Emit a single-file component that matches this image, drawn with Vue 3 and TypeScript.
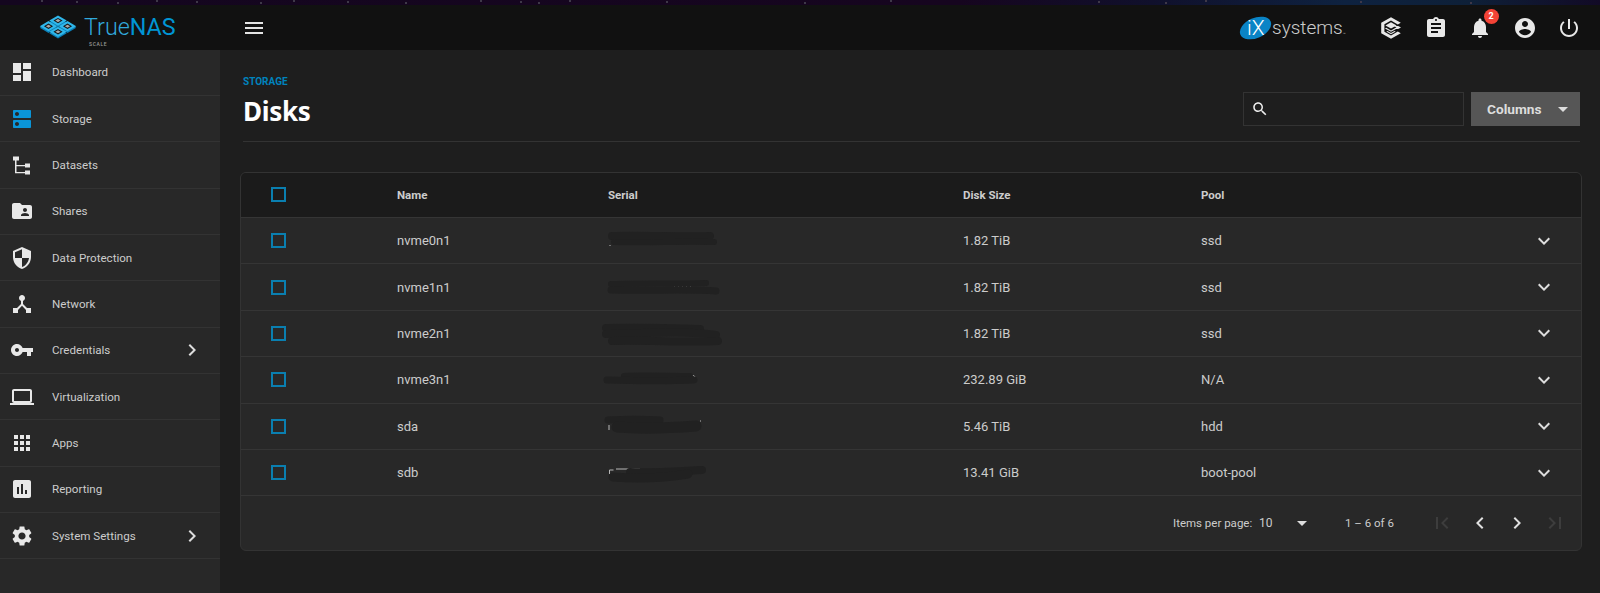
<script setup lang="ts">
interface NavItem { label: string; d: string; arrow?: boolean; active?: boolean }
const nav: NavItem[] = [
  { label: 'Dashboard', d: 'M3 13h8V3H3v10zm0 8h8v-6H3v6zm10 0h8V11h-8v10zm0-18v6h8V3h-8z' },
  { label: 'Storage', active: true, d: 'M20 13H4c-.55 0-1 .45-1 1v6c0 .55.45 1 1 1h16c.55 0 1-.45 1-1v-6c0-.55-.45-1-1-1zM7 19c-1.1 0-2-.9-2-2s.9-2 2-2 2 .9 2 2-.9 2-2 2zM20 3H4c-.55 0-1 .45-1 1v6c0 .55.45 1 1 1h16c.55 0 1-.45 1-1V4c0-.55-.45-1-1-1zM7 9c-1.1 0-2-.9-2-2s.9-2 2-2 2 .9 2 2-.9 2-2 2z' },
  { label: 'Datasets', d: 'M3 3.500h6v4H6.500V12H15v-1.500h5v4h-5V13.300H6.500V19H15v-1.500h5v4h-5v-1.200H5V7.500H3z' },
  { label: 'Shares', d: 'M20 6h-8l-2-2H4c-1.1 0-1.99.9-1.99 2L2 18c0 1.1.9 2 2 2h16c1.1 0 2-.9 2-2V8c0-1.1-.9-2-2-2zm-5 3c1.1 0 2 .9 2 2s-.9 2-2 2-2-.9-2-2 .9-2 2-2zm4 8h-8v-1c0-1.33 2.67-2 4-2s4 .67 4 2v1z' },
  { label: 'Data Protection', d: 'M12 1L3 5v6c0 5.55 3.84 10.74 9 12 5.16-1.26 9-6.45 9-12V5l-9-4zm0 10.99h7c-.53 4.12-3.28 7.79-7 8.94V12H5V6.3l7-3.11v8.8z' },
  { label: 'Network', d: 'M17 16l-4-4V8.82C14.16 8.4 15 7.3 15 6c0-1.66-1.34-3-3-3S9 4.34 9 6c0 1.3.84 2.4 2 2.82V12l-4 4H3v5h5v-3.05l4-4.2 4 4.2V21h5v-5h-4z' },
  { label: 'Credentials', arrow: true, d: 'M12.65 10C11.83 7.67 9.61 6 7 6c-3.31 0-6 2.69-6 6s2.69 6 6 6c2.61 0 4.83-1.67 5.65-4H17v4h4v-4h2v-4H12.65zM7 14c-1.1 0-2-.9-2-2s.9-2 2-2 2 .9 2 2-.9 2-2 2z' },
  { label: 'Virtualization', d: 'M20 18c1.1 0 1.99-.9 1.99-2L22 6c0-1.1-.9-2-2-2H4c-1.1 0-2 .9-2 2v10c0 1.1.9 2 2 2H0v2h24v-2h-4zM4 6h16v10H4V6z' },
  { label: 'Apps', d: 'M4 8h4V4H4v4zm6 12h4v-4h-4v4zm-6 0h4v-4H4v4zm0-6h4v-4H4v4zm6 0h4v-4h-4v4zm6-10v4h4V4h-4zm-6 4h4V4h-4v4zm6 6h4v-4h-4v4zm0 6h4v-4h-4v4z' },
  { label: 'Reporting', d: 'M19 3H5c-1.100 0-2 .9-2 2v14c0 1.100.9 2 2 2h14c1.100 0 2-.9 2-2V5c0-1.100-.9-2-2-2zM9 17H7v-7h2v7zm4 0h-2V7h2v10zm4 0h-2v-4h2v4z' },
  { label: 'System Settings', arrow: true, d: 'M19.14 12.94c.04-.3.06-.61.06-.94 0-.32-.02-.64-.07-.94l2.03-1.58c.18-.14.23-.41.12-.61l-1.92-3.32c-.12-.22-.37-.29-.59-.22l-2.39.96c-.5-.38-1.03-.7-1.62-.94l-.36-2.54c-.04-.24-.24-.41-.48-.41h-3.84c-.24 0-.43.17-.47.41l-.36 2.54c-.59.24-1.13.57-1.62.94l-2.39-.96c-.22-.08-.47 0-.59.22L2.74 8.87c-.12.21-.08.47.12.61l2.03 1.58c-.05.3-.09.63-.09.94s.02.64.07.94l-2.03 1.58c-.18.14-.23.41-.12.61l1.92 3.32c.12.22.37.29.59.22l2.39-.96c.5.38 1.03.7 1.62.94l.36 2.54c.05.24.24.41.48.41h3.84c.24 0 .44-.17.47-.41l.36-2.54c.59-.24 1.13-.56 1.62-.94l2.39.96c.22.08.47 0 .59-.22l1.92-3.32c.12-.22.07-.47-.12-.61l-2.01-1.58zM12 15.6c-1.98 0-3.6-1.62-3.6-3.6s1.62-3.6 3.6-3.6 3.6 1.62 3.6 3.6-1.62 3.6-3.6 3.6z' },
]
interface Stroke { d: string; w: number }
interface Disk { name: string; size: string; pool: string; ink: Stroke[]; speck: string }
const disks: Disk[] = [
  { name: 'nvme0n1', size: '1.82 TiB', pool: 'ssd', ink: [{ d: 'M12 9C40 8 80 10 110 9', w: 8 }, { d: 'M14 15C50 16 80 14 114 15', w: 6 }], speck: 'M10 18v1' },
  { name: 'nvme1n1', size: '1.82 TiB', pool: 'ssd', ink: [{ d: 'M11 11C40 10 80 11 106 10', w: 6 }, { d: 'M11 17C50 18 90 16 116 18', w: 7 }], speck: 'M74 13h1M78 13h1M82 13h1M86 13h1M90 13h1' },
  { name: 'nvme2n1', size: '1.82 TiB', pool: 'ssd', ink: [{ d: 'M6 9C40 8 70 9 100 10', w: 8 }, { d: 'M6 15C50 14 90 12 116 16', w: 8 }, { d: 'M12 22C50 21 90 24 118 22', w: 8 }], speck: 'M110 19h3' },
  { name: 'nvme3n1', size: '232.89 GiB', pool: 'N/A', ink: [{ d: 'M24 10C40 9 70 10 90 10', w: 6 }, { d: 'M7 14C40 15 70 15 94 14', w: 7 }], speck: 'M91 11c1-2 3-2 4 0' },
  { name: 'sda', size: '5.46 TiB', pool: 'hdd', ink: [{ d: 'M8 8C25 7 45 7 60 8', w: 7 }, { d: 'M17 15C40 17 70 16 96 14', w: 11 }], speck: 'M9 13v5M21 15h2M100 9h1' },
  { name: 'sdb', size: '13.41 GiB', pool: 'boot-pool', ink: [{ d: 'M30 13C50 14 80 12 102 11', w: 8 }, { d: 'M13 18C40 20 70 18 88 15', w: 9 }], speck: 'M9.500 15v-4h4M16 10h24' },
]
const starXs = [41, 76, 117, 156, 196, 260, 293, 347, 405, 480, 520, 538, 569, 666, 804, 890, 1098, 1165, 1205, 1360, 1470]
const stars = starXs.map((x, i) => ({ gap: i === 0 ? x : x - starXs[i - 1] - 2, top: i % 3 }))
const cells: [number, number][] = [[0, 0], [1, 0], [0, 1], [1, 1]]
</script>

<template>
  <div class="page">
    <div class="strip"><i v-for="(s, i) in stars" :key="i" class="star" :style="{ marginLeft: s.gap + 'px', marginTop: s.top + 'px' }"></i></div>
    <header class="topbar">
      <div class="brand">
        <svg class="brand-mark" viewBox="0 0 38 26">
          <g v-for="c in cells" :key="c.join()">
            <g transform="translate(19 1) matrix(9.500 5.600 -9.500 5.600 0 0)">
              <rect :x="c[0] + 0.04" :y="c[1] + 0.04" width=".92" height=".92" fill="#0a7fb8" transform="translate(.14 .14)" />
              <rect :x="c[0] + 0.04" :y="c[1] + 0.04" width=".92" height=".92" fill="#2fb6ea" />
              <rect :x="c[0] + 0.26" :y="c[1] + 0.26" width=".48" height=".48" fill="#161616" />
              <rect :x="c[0] + 0.36" :y="c[1] + 0.36" width=".28" height=".28" fill="#a8a8a8" />
            </g>
          </g>
        </svg>
        <div class="brand-text">
          <div class="brand-name"><span class="true">True</span><span class="nas">NAS</span></div>
          <div class="brand-sub">SCALE</div>
        </div>
      </div>
      <svg class="ic24 menu" viewBox="0 0 24 24"><path d="M3 18h18v-2H3v2zm0-5h18v-2H3v2zm0-7v2h18V6H3z" /></svg>
      <div class="grow"></div>
      <div class="ix">
        <div class="ix-logo">
          <span class="ix-oval"></span>
          <span class="ix-text">iX</span>
        </div>
        <span class="ix-word">systems</span><span class="tm">™</span>
      </div>
      <svg class="ic24 tb stack" viewBox="0 0 24 24">
        <path d="M12 1.200l9.800 5.500-3 1.700L12 4.600 5.400 8.200v7.600L12 19.400l6.800-3.800 3 1.700L12 22.800l-9.800-5.500V6.700z" />
        <path d="M12 6.300l5.600 3.100L12 12.500 6.400 9.400zM7.200 11.800l4.800 2.600 4.800-2.600 1.200.7-6 3.300-6-3.300zM8.500 14.900l3.500 2 3.500-2 1.200.7L12 18.300l-4.700-2.700z" />
        <path d="M15 9.900h4.200L22 11.400l-2.800 1.500h-3.600l1.800-1.500z" />
      </svg>
      <svg class="ic24 tb clip" viewBox="0 0 24 24"><path d="M19 3h-4.180C14.400 1.840 13.300 1 12 1c-1.300 0-2.400.84-2.820 2H5c-1.100 0-2 .9-2 2v14c0 1.100.9 2 2 2h14c1.100 0 2-.9 2-2V5c0-1.100-.9-2-2-2zm-7 0c.55 0 1 .45 1 1s-.45 1-1 1-1-.45-1-1 .45-1 1-1zm2 14H7v-2h7v2zm3-4H7v-2h10v2zm0-4H7V7h10v2z" /></svg>
      <div class="bell">
        <svg class="ic24" viewBox="0 0 24 24"><path d="M12 22c1.100 0 2-.9 2-2h-4c0 1.100.89 2 2 2zm6-6v-5c0-3.070-1.640-5.640-4.500-6.320V4c0-.83-.67-1.500-1.500-1.500s-1.500.67-1.500 1.500v.68C7.630 5.360 6 7.920 6 11v5l-2 2v1h16v-1l-2-2z" /></svg>
        <span class="badge">2</span>
      </div>
      <svg class="ic24 tb acct" viewBox="0 0 24 24"><path d="M12 2C6.480 2 2 6.480 2 12s4.480 10 10 10 10-4.480 10-10S17.520 2 12 2zm0 3c1.660 0 3 1.340 3 3s-1.340 3-3 3-3-1.340-3-3 1.340-3 3-3zm0 14.200c-2.500 0-4.710-1.280-6-3.220.03-1.990 4-3.080 6-3.080 1.990 0 5.970 1.090 6 3.080-1.290 1.940-3.500 3.220-6 3.220z" /></svg>
      <svg class="ic24 tb power" viewBox="0 0 24 24"><path d="M13 3h-2v10h2V3zm4.830 2.170l-1.420 1.420C17.990 7.860 19 9.810 19 12c0 3.870-3.130 7-7 7s-7-3.130-7-7c0-2.190 1.010-4.140 2.580-5.420L6.170 5.170C4.230 6.820 3 9.260 3 12c0 4.970 4.030 9 9 9s9-4.030 9-9c0-2.740-1.230-5.180-3.170-6.830z" /></svg>
    </header>
    <div class="body">
      <aside class="side">
        <nav class="nav">
          <div v-for="n in nav" :key="n.label" class="nav-row">
            <svg class="ic24 nav-ic" :class="{ active: n.active }" viewBox="0 0 24 24"><path :d="n.d" /></svg>
            <span class="nav-label">{{ n.label }}</span>
            <svg v-if="n.arrow" class="ic24 nav-arrow" viewBox="0 0 24 24"><path d="M10 6L8.590 7.410 13.170 12l-4.580 4.590L10 18l6-6z" /></svg>
          </div>
        </nav>
      </aside>
      <main class="main">
        <div class="head">
          <div class="titles">
            <div class="crumb">STORAGE</div>
            <h1 class="title">Disks</h1>
          </div>
          <div class="search">
            <svg class="search-ic" viewBox="0 0 24 24"><path d="M15.500 14h-.79l-.28-.27C15.410 12.590 16 11.110 16 9.500 16 5.910 13.090 3 9.500 3S3 5.910 3 9.500 5.910 16 9.500 16c1.610 0 3.090-.59 4.230-1.570l.27.28v.79l5 4.990L20.490 19l-4.990-5zm-6 0C7.010 14 5 11.990 5 9.500S7.010 5 9.500 5 14 7.010 14 9.500 11.990 14 9.500 14z" /></svg>
          </div>
          <button class="columns" type="button">Columns<span class="caret"></span></button>
        </div>
        <section class="card">
          <div class="row hrow">
            <span class="check"></span><span>Name</span><span>Serial</span><span>Disk Size</span><span>Pool</span><span></span>
          </div>
          <div v-for="d in disks" :key="d.name" class="row drow">
            <span class="check"></span>
            <span>{{ d.name }}</span>
            <span class="serial">
              <svg width="126" height="28" viewBox="0 0 126 28">
                <path :d="d.speck" fill="none" stroke="#b8b8b8" stroke-width="1" />
                <path v-for="(s, i) in d.ink" :key="i" :d="s.d" fill="none" stroke="#212121" :stroke-width="s.w" stroke-linecap="round" />
              </svg>
            </span>
            <span>{{ d.size }}</span>
            <span>{{ d.pool }}</span>
            <svg class="ic24 more" viewBox="0 0 24 24"><path d="M16.590 8.590L12 13.170 7.410 8.590 6 10l6 6 6-6z" /></svg>
          </div>
          <div class="pager">
            <span class="ppl">Items per page:</span>
            <span class="pps">10</span>
            <span class="pcaret"></span>
            <span class="range">1 – 6 of 6</span>
            <svg class="ic24 pg off" viewBox="0 0 24 24"><path d="M18.410 16.590L13.820 12l4.590-4.590L17 6l-6 6 6 6zM6 6h2v12H6z" /></svg>
            <svg class="ic24 pg" viewBox="0 0 24 24"><path d="M15.410 7.410L14 6l-6 6 6 6 1.410-1.410L10.830 12z" /></svg>
            <svg class="ic24 pg" viewBox="0 0 24 24"><path d="M10 6L8.590 7.410 13.170 12l-4.580 4.590L10 18l6-6z" /></svg>
            <svg class="ic24 pg off" viewBox="0 0 24 24"><path d="M5.590 7.410L10.180 12l-4.590 4.590L7 18l6-6-6-6zM16 6h2v12h-2z" /></svg>
          </div>
        </section>
      </main>
    </div>
  </div>
</template>

<style>
html, body { margin: 0; background: #1e1e1e; }
</style>

<style scoped>
.page { width: 1600px; height: 593px; overflow: hidden; display: flex; flex-direction: column; font-family: Roboto, "Liberation Sans", sans-serif; color: #ccc; background: #1e1e1e; }
.strip { height: 4.500px; flex: none; display: flex; overflow: hidden; background: linear-gradient(90deg, #14061f 0%, #16051f 60%, #10102c 72%, #0e2240 84%, #0e2038 92%, #120a26 100%); }
.star { display: block; width: 2px; height: 2px; flex: none; background: #3e3848; }
.topbar { height: 45px; flex: none; display: flex; align-items: center; padding-top: 1px; box-sizing: border-box; background: #111; }
.ic24 { width: 24px; height: 24px; flex: none; fill: currentColor; display: block; }
.brand { width: 242px; flex: none; display: flex; align-items: flex-start; padding-left: 39px; box-sizing: border-box; }
.brand-mark { width: 38px; height: 26px; flex: none; margin-top: 2px; }
.brand-text { margin-left: 7px; height: 32px; }
.brand-name { font-size: 23.300px; line-height: 30px; font-weight: 300; white-space: nowrap; }
.true { color: #31a9dc; }
.nas { color: #0095d5; font-weight: 400; }
.brand-sub { font-size: 5px; line-height: 6px; letter-spacing: .6px; color: #999; margin-left: 5px; margin-top: -1px; font-weight: 500; }
.menu { color: #e4e4e4; }
.grow { flex: 1; }
.ix { display: flex; align-items: center; width: 121px; flex: none; margin-right: 19px; }
.ix-logo { position: relative; width: 33px; height: 24px; flex: none; }
.ix-oval { position: absolute; left: 0; top: 2px; width: 33px; height: 20px; border-radius: 50%; background: #0a84c6; transform: rotate(-24deg); }
.ix-text { position: absolute; left: 8px; top: 0; color: #fff; font-size: 21px; line-height: 24px; font-weight: 300; }
.ix-word { font-size: 19px; font-weight: 300; color: #ccc; margin-left: 0; }
.tm { font-size: 5px; color: #aaa; align-self: flex-start; margin-top: 15px; }
.tb { color: #e8e8e8; }
.stack { margin-right: 21px; }
.clip { margin-right: 20px; }
.bell { position: relative; width: 24px; height: 24px; flex: none; margin-right: 21px; color: #e8e8e8; }
.badge { position: absolute; left: 15.500px; top: -6.500px; width: 15px; height: 15px; border-radius: 50%; background: #f44336; color: #fff; font-size: 9px; font-weight: 700; line-height: 15px; text-align: center; }
.acct { margin-right: 20px; }
.power { margin-right: 19px; }
.body { flex: 1; display: flex; min-height: 0; }
.side { width: 220px; flex: none; background: #282828; }
.nav-row { height: 46.350px; box-sizing: border-box; border-bottom: 1.500px solid #333; display: flex; align-items: center; padding-left: 10px; }
.nav-ic { color: #e8e8e8; }
.nav-ic.active { color: #0a95d8; }
.nav-label { margin-left: 18px; font-size: 11.600px; font-weight: 400; color: #ccc; flex: 1; }
.nav-arrow { color: #ddd; margin-right: 16px; }
.main { flex: 1; min-width: 0; padding: 0 20px 0 20px; background: #1e1e1e; }
.head { margin-left: 3px; height: 92px; box-sizing: border-box; border-bottom: 1px solid #333; display: flex; align-items: flex-start; }
.titles { flex: 1; padding-top: 27px; }
.crumb { font-size: 10px; line-height: 10px; font-weight: 700; color: #0083bd; }
.title { margin: 9px 0 0; font-size: 26px; line-height: 30px; font-weight: 700; color: #fff; letter-spacing: -.3px; font-family: "Noto Sans", Roboto, sans-serif; }
.search { width: 221px; height: 34px; box-sizing: border-box; margin-top: 42.500px; border: 1px solid #333; display: flex; align-items: center; padding-left: 7px; }
.search-ic { width: 18px; height: 18px; fill: #eee; }
.columns { width: 109px; height: 34px; margin: 42.500px 0 0 7px; border: 0; background: #565656; color: #ddd; font: 700 13.700px Roboto, sans-serif; display: flex; align-items: center; justify-content: space-between; padding: 0 12px 0 16px; }
.caret { width: 0; height: 0; border-left: 5px solid transparent; border-right: 5px solid transparent; border-top: 5px solid #ddd; }
.card { margin: 30px 0 0 0; width: 1342px; box-sizing: border-box; border: 1px solid #333; border-radius: 6px; overflow: hidden; background: #282828; }
.row { display: grid; grid-template-columns: 126px 211px 355px 238px 1fr 24px; align-items: center; padding-left: 30px; padding-right: 25px; box-sizing: border-box; font-size: 13px; color: #ccc; }
.hrow { height: 44.500px; background: #1b1b1b; font-size: 11.500px; font-weight: 700; }
.drow { height: 46.400px; border-top: 1.500px solid #353535; }
.check { display: block; width: 11px; height: 11px; border: 2px solid #0a7fb0; }
.serial { height: 28px; display: block; margin-left: -8px; }
.serial svg { display: block; }
.more { color: #ddd; }
.pager { height: 55px; border-top: 1.500px solid #353535; display: flex; align-items: center; font-size: 11.500px; color: #ccc; box-sizing: border-box; padding-left: 932px; }
.ppl { width: 86px; flex: none; }
.pps { width: 38px; flex: none; font-size: 12px; }
.pcaret { width: 0; height: 0; flex: none; border-left: 5px solid transparent; border-right: 5px solid transparent; border-top: 5px solid #ddd; margin-right: 38px; }
.range { width: 85px; flex: none; font-size: 11.500px; }
.pg { color: #e0e0e0; margin-right: 13.500px; }
.pg.off { color: #3d3d3d; }
</style>
